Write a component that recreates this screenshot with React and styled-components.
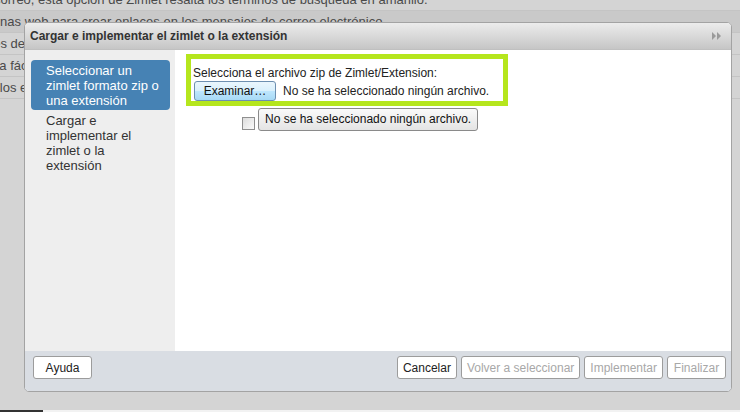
import React from "react";
import styled, { createGlobalStyle } from "styled-components";

const GlobalStyle = createGlobalStyle`
  html, body {
    margin: 0;
    padding: 0;
    height: 100%;
    overflow: hidden;
  }
  body {
    background: #d4d4d4;
    font-family: "Liberation Sans", Arial, sans-serif;
    font-size: 12px;
    color: #333;
  }
  #root {
    height: 100%;
  }
`;

const Page = styled.div`
  position: relative;
  display: flex;
  flex-direction: column;
  height: 100%;
  overflow: hidden;
`;

const RowList = styled.div`
  display: flex;
  flex-direction: column;
  margin-top: -11px;
`;

const PageRow = styled.div`
  height: 21px;
  line-height: 21px;
  white-space: nowrap;
  color: #4a4a4a;
  font-size: 13px;
  background: ${(p) => (p.$active ? "#c9c9c9" : "#d4d4d4")};
  border-bottom: 1px solid #c4c4c4;
  text-indent: ${(p) => p.$indent}px;
`;

const Spacer = styled.div`
  flex: 1;
`;

const BottomStrip = styled.div`
  display: flex;
  height: 2px;
`;

const StripDark = styled.div`
  width: 43px;
  background: #333;
`;

const StripLight = styled.div`
  flex: 1;
  background: #f2f2f2;
`;

const Dialog = styled.div`
  position: absolute;
  left: 24px;
  top: 22px;
  width: 706px;
  height: 368px;
  display: flex;
  flex-direction: column;
  border: 1px solid #a3a3a3;
  border-radius: 5px;
  overflow: hidden;
  background: #fff;
`;

const Header = styled.div`
  display: flex;
  align-items: center;
  justify-content: space-between;
  height: 26px;
  padding: 0 9px 0 5px;
  background: linear-gradient(#ececec, #c6c6c6);
  border-bottom: 1px solid #c0c0c0;
`;

const Title = styled.div`
  font-weight: bold;
  font-size: 12px;
  color: #333;
`;

const Body = styled.div`
  flex: 1;
  display: flex;
  min-height: 0;
`;

const Sidebar = styled.div`
  width: 150px;
  background: #eeeeee;
  padding-top: 10px;
  display: flex;
  flex-direction: column;
`;

const Step = styled.div`
  margin: 0 5px 0 6px;
  padding: 3px 9px 2px 15px;
  font-size: 13px;
  line-height: 15px;
  border-radius: 4px;
  color: ${(p) => (p.$selected ? "#fff" : "#333")};
  background: ${(p) => (p.$selected ? "#4682b4" : "transparent")};
`;

const Content = styled.div`
  flex: 1;
  padding: 4px 0 0 11px;
  display: flex;
  flex-direction: column;
  align-items: flex-start;
`;

const HighlightBox = styled.div`
  width: 310px;
  padding: 6px 0 0 2px;
  height: 36px;
  border: 5px solid #b5e61d;
  display: flex;
  flex-direction: column;
`;

const Label = styled.div`
  line-height: 16px;
  color: #222;
`;

const FileRow = styled.div`
  display: flex;
  align-items: center;
  gap: 7px;
  color: #222;
`;

const BrowseButton = styled.button`
  height: 20px;
  width: 82px;
  margin-left: 1px;
  padding: 0;
  font-family: inherit;
  font-size: 12px;
  color: #111;
  border: 1px solid #6d8fb0;
  border-radius: 3px;
  background: linear-gradient(#eaf6fd 0%, #d9f0fc 50%, #bee6fd 51%, #a7d9f5 100%);
`;

const HintRow = styled.div`
  display: flex;
  align-items: flex-end;
  gap: 3px;
  margin: 2px 0 0 56px;
`;

const CheckBox = styled.span`
  width: 11px;
  height: 11px;
  margin-bottom: 1px;
  border: 1px solid #8f8f8f;
  background: linear-gradient(135deg, #dcdcdc, #fbfbfb);
`;

const HintBubble = styled.div`
  height: 21px;
  line-height: 21px;
  padding: 0 6px;
  color: #111;
  border: 1px solid #8a8a8a;
  border-radius: 3px;
  background: linear-gradient(#fafafa, #e4e4e4);
`;

const Footer = styled.div`
  height: 40px;
  display: flex;
  justify-content: space-between;
  align-items: flex-start;
  padding: 5px 5px 0 8px;
  box-sizing: border-box;
  background: #d9dde3;
`;

const ButtonGroup = styled.div`
  display: flex;
  gap: 4px;
`;

const FooterButton = styled.button`
  height: 23px;
  min-width: 59px;
  padding: 0 5px;
  font-family: inherit;
  font-size: 12px;
  color: ${(p) => (p.disabled ? "#a8a8a8" : "#222")};
  background: #fff;
  border: 1px solid #9c9c9c;
  border-radius: 3px;
`;

function ExpandIcon() {
  return (
    <svg width="10" height="8" viewBox="0 0 10 8">
      <path d="M0 0 L4 4 L0 8 Z" fill="#9a9a9a" />
      <path d="M5 0 L9 4 L5 8 Z" fill="#9a9a9a" />
    </svg>
  );
}

const backgroundRows = [
  { text: "correo, esta opción de Zimlet resalta los términos de búsqueda en amarillo.", indent: -6 },
  { text: "ginas web para crear enlaces en los mensajes de correo electrónico.", indent: -10 },
  { text: "des de", indent: -14 },
  { text: "ra fác", indent: -5 },
  { text: "a los e", indent: -11 },
];

export default function App() {
  return (
    <>
      <GlobalStyle />
      <Page>
        <RowList>
          {backgroundRows.map((row, i) => (
            <PageRow key={i} $active={i === 1} $indent={row.indent}>
              {row.text}
            </PageRow>
          ))}
        </RowList>
        <Spacer />
        <BottomStrip>
          <StripDark />
          <StripLight />
        </BottomStrip>

        <Dialog>
          <Header>
            <Title>Cargar e implementar el zimlet o la extensión</Title>
            <ExpandIcon />
          </Header>
          <Body>
            <Sidebar>
              <Step $selected>
                Seleccionar un zimlet formato zip o una extensión
              </Step>
              <Step>Cargar e implementar el zimlet o la extensión</Step>
            </Sidebar>
            <Content>
              <HighlightBox>
                <Label>Selecciona el archivo zip de Zimlet/Extension:</Label>
                <FileRow>
                  <BrowseButton>Examinar…</BrowseButton>
                  <span>No se ha seleccionado ningún archivo.</span>
                </FileRow>
              </HighlightBox>
              <HintRow>
                <CheckBox />
                <HintBubble>No se ha seleccionado ningún archivo.</HintBubble>
              </HintRow>
            </Content>
          </Body>
          <Footer>
            <FooterButton>Ayuda</FooterButton>
            <ButtonGroup>
              <FooterButton>Cancelar</FooterButton>
              <FooterButton disabled>Volver a seleccionar</FooterButton>
              <FooterButton disabled>Implementar</FooterButton>
              <FooterButton disabled>Finalizar</FooterButton>
            </ButtonGroup>
          </Footer>
        </Dialog>
      </Page>
    </>
  );
}
